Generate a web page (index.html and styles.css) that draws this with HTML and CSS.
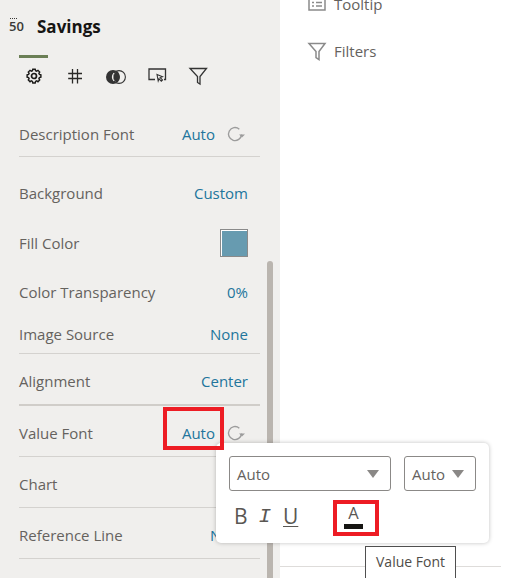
FILE: index.html
```html
<!DOCTYPE html>
<html lang="en">
<head>
    <meta charset="UTF-8">
    <title>Savings</title>
    <link rel="stylesheet" href="styles.css">
</head>
<body>
    <div class="page">
        <aside class="panel">
            <div class="title-row">
                <span class="viz-icon"><span class="viz-dots"></span>50</span>
                <h1>Savings</h1>
            </div>
            <div class="tabs">
                <svg width="20" height="20" viewBox="0 0 20 20" fill="none" stroke="#1c1b19" stroke-width="1.700">
                    <path d="M8.600 3.200h2.800l.4 1.700 1.300.6 1.500-.9 2 2-.9 1.500.6 1.300 1.700.4v2.800l-1.700.4-.6 1.300.9 1.500-2 2-1.500-.9-1.300.6-.4 1.700H8.600l-.4-1.700-1.300-.6-1.500.9-2-2 .9-1.500-.6-1.300-1.700-.4v-2.800l1.700-.4.6-1.300-.9-1.500 2-2 1.500.9 1.300-.6z" transform="translate(1.400 .4) scale(.86)"/>
                    <circle cx="10" cy="10" r="2.500"/>
                </svg>
                <svg width="20" height="20" viewBox="0 0 20 20" fill="none" stroke="#2a2927" stroke-width="1.300">
                    <path d="M7.500 3v14.500M12.500 3v14.500M3.200 7.500h13.800M3.200 12.500h13.800"/>
                </svg>
                <svg width="20" height="20" viewBox="0 0 20 20" fill="none" stroke="#333" stroke-width="1.100">
                    <circle cx="7" cy="11" r="7" fill="#333" stroke="none"/>
                    <circle cx="13" cy="11" r="6.400" fill="#f0efed"/>
                    <path d="M8 7A6.400 6.400 0 0 0 8 15" stroke="#f0efed"/>
                    <path d="M10.750 5.100a7 7 0 0 1 0 11.800a7 7 0 0 1 0-11.800z" fill="#333" stroke="none"/>
                </svg>
                <svg width="20" height="20" viewBox="0 0 20 20" fill="none" stroke="#333" stroke-width="1.300">
                    <path d="M8 13.500H2V3h16.500v10.500h-1.500"/>
                    <path d="M10 8.500l5.500 2.200-2.300.9 2.300 2.300-1.200 1.200-2.300-2.300-.8 2.200z" stroke-width="1.100"/>
                </svg>
                <svg width="20" height="20" viewBox="0 0 20 20" fill="none" stroke="#333" stroke-width="1.300">
                    <path d="M2 2.500h16.500L12 10.500v7.500l-2.500-1.500v-6z"/>
                </svg>
            </div>

            <div class="row row-first row-line">
                <span>Description Font</span>
                <span class="value">Auto</span>
                <svg class="reset" width="18" height="18" viewBox="0 0 18 18" fill="none" stroke="#9c9c9c" stroke-width="1.400">
                    <path d="M14.500 9.500A6.500 6.500 0 1 1 12.300 4.200"/>
                    <path d="M12 9.500h6l-3 3z" fill="#9c9c9c" stroke="none"/>
                </svg>
            </div>
            <div class="row row-bg">
                <span>Background</span>
                <span class="value">Custom</span>
            </div>
            <div class="row row-fill">
                <span>Fill Color</span>
                <span class="swatch"></span>
            </div>
            <div class="row row-transparency">
                <span>Color Transparency</span>
                <span class="value">0%</span>
            </div>
            <div class="row row-image row-line">
                <span>Image Source</span>
                <span class="value">None</span>
            </div>
            <div class="row row-std row-thick">
                <span>Alignment</span>
                <span class="value">Center</span>
            </div>
            <div class="row row-std row-line">
                <span>Value Font</span>
                <span class="value">Auto</span>
                <svg class="reset" width="18" height="18" viewBox="0 0 18 18" fill="none" stroke="#9c9c9c" stroke-width="1.400">
                    <path d="M14.500 9.500A6.500 6.500 0 1 1 12.300 4.200"/>
                    <path d="M12 9.500h6l-3 3z" fill="#9c9c9c" stroke="none"/>
                </svg>
            </div>
            <div class="row row-std row-line">
                <span>Chart</span>
            </div>
            <div class="row row-std row-line">
                <span>Reference Line</span>
                <span class="value">None</span>
            </div>
            <div class="scrollbar"></div>
        </aside>

        <main class="content">
            <div class="side-item side-tooltip">
                <svg width="20" height="20" viewBox="0 0 20 20" fill="none" stroke="#8a8a8a" stroke-width="1.500">
                    <path d="M2 -1h16v17H2zM5 5h2M9 5h6M5 8.500h2M9 8.500h6M5 12h2M9 12h6"/>
                </svg>
                <span>Tooltip</span>
            </div>
            <div class="side-item">
                <svg width="20" height="20" viewBox="0 0 20 20" fill="none" stroke="#8a8a8a" stroke-width="1.500">
                    <path d="M2 2.500h16l-6 8v8l-3-2v-6z"/>
                </svg>
                <span>Filters</span>
            </div>
            <div class="content-line"></div>
        </main>

        <div class="popup">
            <div class="popup-selects">
                <div class="select select-wide">Auto<span class="caret"></span></div>
                <div class="select select-small">Auto<span class="caret"></span></div>
            </div>
            <div class="popup-tools">
                <span class="tool tool-b">B</span>
                <span class="tool tool-i">I</span>
                <span class="tool tool-u">U</span>
                <span class="tool-color">A<span class="color-bar"></span></span>
            </div>
        </div>
        <div class="tip">Value Font</div>
        <div class="mark mark-auto"></div>
        <div class="mark mark-color"></div>
    </div>
</body>
</html>
```

FILE: styles.css
```css
* {
    box-sizing: border-box;
}

body {
    margin: 0;
    background-color: #fff;
    font-family: "Open Sans", sans-serif;
    font-size: 15px;
    color: #65625e;
}

.page {
    position: relative;
    display: flex;
    width: 505px;
    height: 578px;
    overflow: hidden;
}

.panel {
    position: relative;
    width: 280px;
    flex-shrink: 0;
    background-color: #f0efed;
    padding-top: 14px;
}

.title-row {
    display: flex;
    align-items: center;
    height: 24px;
    padding-left: 9px;
}

.viz-icon {
    position: relative;
    width: 28px;
    font-size: 13px;
    font-weight: 600;
    color: #3a3937;
}

.viz-dots {
    position: absolute;
    left: 1px;
    top: 1px;
    width: 7px;
    border-top: 1px dotted #3a3937;
}

h1 {
    margin: 0;
    font-size: 17px;
    font-weight: 700;
    color: #161513;
}

/* tabs */
.tabs {
    position: relative;
    display: flex;
    gap: 21px;
    height: 40px;
    margin-top: 17px;
    margin-left: 19px;
    padding-top: 11px;
    padding-left: 5px;
}

.tabs::before {
    content: "";
    position: absolute;
    left: 0;
    top: 0;
    width: 29px;
    height: 3px;
    background-color: #6b7f55;
}

/* rows */
.row {
    display: flex;
    align-items: center;
    justify-content: space-between;
    width: 241px;
    margin-left: 19px;
}

.row-line {
    border-bottom: 1px solid #d4d2cf;
}

.row-thick {
    border-bottom: 2px solid #d0cdc9;
}

.row-first {
    height: 62px;
    padding-top: 16px;
}

.row-bg { height: 38px; margin-top: 17px; }
.row-fill { height: 30px; margin-top: 16px; }
.row-transparency { height: 30px; margin-top: 19px; }
.row-image { height: 38px; margin-top: 9px; padding-bottom: 1px; }
.row-std { height: 51px; padding-top: 4px; }
.row-thick.row-std { height: 52px; }

.value {
    margin-left: auto;
    margin-right: 12px;
    color: #22759c;
}

.reset {
    margin-right: 15px;
}

.swatch {
    width: 28px;
    height: 28px;
    margin-right: 12px;
    background-color: #679bb0;
    border: 1px solid #8a8a8a;
    box-shadow: inset 1px 1px 0 #fff;
}

.scrollbar {
    position: absolute;
    left: 267px;
    top: 261px;
    width: 6px;
    height: 317px;
    border-radius: 3px 3px 0 0;
    background-color: #bab5af;
}

/* right side */
.content {
    position: relative;
    flex: 1;
    padding-left: 27px;
}

.side-item {
    display: flex;
    align-items: center;
    gap: 7px;
    height: 20px;
    margin-top: 27px;
}

.side-tooltip {
    margin-top: -6px;
}

.content-line {
    position: absolute;
    left: 0;
    top: 566px;
    width: 221px;
    border-top: 1px solid #dedcda;
}

/* popup */
.popup {
    position: absolute;
    left: 216px;
    top: 443px;
    width: 273px;
    height: 100px;
    padding: 13px;
    background-color: #fff;
    border-radius: 5px;
    box-shadow: 0 0 4px rgba(0, 0, 0, 0.25);
}

.popup-selects {
    display: flex;
    justify-content: space-between;
}

.select {
    display: flex;
    align-items: center;
    justify-content: space-between;
    height: 35px;
    padding: 0 11px 0 7px;
    border: 1px solid #8b8987;
    border-radius: 3px;
}

.select-wide { width: 162px; }
.select-small { width: 72px; }

.caret {
    border-left: 6px solid transparent;
    border-right: 6px solid transparent;
    border-top: 8px solid #8a8886;
}

.popup-tools {
    display: flex;
    align-items: center;
    margin-top: 12px;
    height: 26px;
    padding-left: 5px;
    font-size: 21px;
    color: #5a5753;
}

.tool {
    width: 24.500px;
}

.tool-i {
    font-family: "Liberation Mono", monospace;
    font-style: italic;
}

.tool-u {
    width: 16px;
    text-decoration: underline;
    text-decoration-thickness: 1px;
    text-underline-offset: 2px;
}

.tool-color {
    align-self: flex-start;
    width: 19px;
    margin-top: 1px;
    margin-left: 45px;
    text-align: center;
    font-size: 16.500px;
    line-height: 18px;
}

.color-bar {
    display: block;
    height: 5px;
    margin-top: 2px;
    background-color: #161513;
}

.tip {
    position: absolute;
    left: 365px;
    top: 546px;
    width: 91px;
    height: 34px;
    padding-top: 5px;
    text-align: center;
    font-size: 14px;
    background-color: #fff;
    border: 1px solid #4f4f4f;
    color: #4f4c48;
}

.mark {
    position: absolute;
    border: 4px solid #ed1c24;
}

.mark-auto {
    left: 163px;
    top: 407px;
    width: 61px;
    height: 43px;
}

.mark-color {
    left: 333px;
    top: 500px;
    width: 46px;
    height: 36px;
}
```
